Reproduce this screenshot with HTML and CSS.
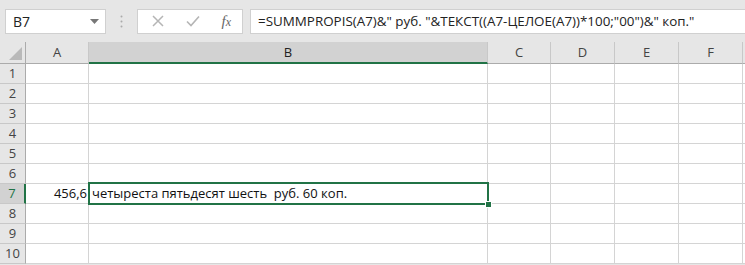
FILE: index.html
```html
<!DOCTYPE html>
<html>
<head>
    <meta name="viewport" content="width=device-width, initial-scale=1.0">
    <link rel="stylesheet" href="styles.css">
</head>
<body>
    <div class="formula-bar">
        <div class="name-box">
            <span>B7</span>
            <svg class="caret" width="9" height="5" viewBox="0 0 9 5"><path d="M0 0h9L4.5 5z" fill="#777"/></svg>
        </div>
        <div class="grip">
            <svg width="3" height="13" viewBox="0 0 3 13"><circle cx="1.5" cy="1.5" r="1" fill="#aaa"/><circle cx="1.5" cy="6.5" r="1" fill="#aaa"/><circle cx="1.5" cy="11.5" r="1" fill="#aaa"/></svg>
        </div>
        <div class="fx-buttons">
            <svg width="12" height="12" viewBox="0 0 12 12"><path d="M1 1l10 10M11 1L1 11" stroke="#b5b5b5" stroke-width="1.5"/></svg>
            <svg width="14" height="12" viewBox="0 0 14 12"><path d="M1 6.5l4 4L13 1.5" stroke="#b5b5b5" stroke-width="1.6" fill="none"/></svg>
            <span class="fx"><i>f</i><i>x</i></span>
        </div>
        <div class="formula">=SUMMPROPIS(A7)&amp;" руб. "&amp;ТЕКСТ((A7-ЦЕЛОЕ(A7))*100;"00")&amp;" коп."</div>
    </div>

    <div class="sheet">
        <div class="corner"><svg width="13" height="13" viewBox="0 0 13 13"><path d="M13 0v13H0z" fill="#b9b9b9"/></svg></div>
        <div class="col-head">A</div>
        <div class="col-head active">B</div>
        <div class="col-head">C</div>
        <div class="col-head">D</div>
        <div class="col-head">E</div>
        <div class="col-head">F</div>
        <div class="col-head"></div>
    </div>

    <script>
        // строим строки таблицы
        const sheet = document.querySelector(".sheet");
        for (let r = 1; r <= 10; r++) {
            const head = document.createElement("div");
            head.className = "row-head" + (r === 7 ? " active" : "");
            head.textContent = r;
            sheet.appendChild(head);
            for (let c = 0; c < 7; c++) {
                const cell = document.createElement("div");
                cell.className = "cell";
                if (r === 7 && c === 0) {
                    cell.className += " num";
                    cell.textContent = "456,6";
                }
                if (r === 7 && c === 1) {
                    cell.className += " selected";
                    cell.innerHTML = "четыреста пятьдесят шесть&nbsp; руб. 60 коп.<span class=\"handle\"></span>";
                }
                sheet.appendChild(cell);
            }
        }
    </script>
</body>
</html>
```

FILE: styles.css
```css
body {
    margin: 0;
    background-color: #e6e6e6;
    font-family: "Open Sans", "Noto Sans", sans-serif;
    overflow: hidden;
}

.formula-bar {
    display: flex;
    align-items: center;
    height: 42px;
    padding: 0 0 0 5px;
    box-sizing: border-box;
}

.name-box {
    display: flex;
    align-items: center;
    justify-content: space-between;
    width: 101px;
    height: 25px;
    box-sizing: border-box;
    background: #fff;
    border: 1px solid #d0d0d0;
    padding: 0 6px 0 7px;
    font-size: 14px;
    color: #222;
}

.grip {
    width: 31px;
    display: flex;
    justify-content: center;
}

.fx-buttons {
    display: flex;
    align-items: center;
    justify-content: space-between;
    width: 106px;
    height: 25px;
    box-sizing: border-box;
    background: #fff;
    border: 1px solid #d0d0d0;
    padding: 0 11px 0 14px;
}

.fx {
    font-family: "Liberation Serif", serif;
    font-size: 15px;
    color: #666;
}

.fx i:last-child {
    font-size: 12px;
}

.formula {
    flex: 1;
    height: 25px;
    margin-left: 7px;
    box-sizing: border-box;
    background: #fff;
    border: 1px solid #d0d0d0;
    border-right: none;
    padding: 0 0 0 7px;
    line-height: 23px;
    font-size: 13.4px;
    color: #222;
    white-space: nowrap;
}

.sheet {
    display: grid;
    grid-template-columns: 26px 63px 399px 63px 64px 64px 64px 1fr;
    grid-template-rows: 22px;
    grid-auto-rows: 20px;
    background: #fff;
}

.corner,
.col-head,
.row-head {
    background: #e6e6e6;
    box-sizing: border-box;
    color: #444;
    font-size: 13px;
}

.corner {
    display: flex;
    align-items: flex-end;
    justify-content: flex-end;
    padding: 0 3px 3px 0;
    border-right: 1px solid #ababab;
    border-bottom: 1px solid #ababab;
}

.col-head {
    text-align: center;
    line-height: 20px;
    border-right: 1px solid #c8c8c8;
    border-bottom: 1px solid #ababab;
}

.col-head.active {
    background: #d2d2d2;
    color: #222;
    border-bottom: 2px solid #217346;
}

.row-head {
    text-align: center;
    line-height: 19px;
    border-right: 1px solid #ababab;
    border-bottom: 1px solid #c8c8c8;
}

.row-head.active {
    background: #d2d2d2;
    color: #217346;
    border-right: 2px solid #217346;
}

.cell {
    box-sizing: border-box;
    border-right: 1px solid #d4d4d4;
    border-bottom: 1px solid #d4d4d4;
    font-family: "Open Sans", "Noto Sans", sans-serif;
    font-size: 13px;
    line-height: 19px;
    color: #111;
    padding: 0 2px 0 3px;
    white-space: nowrap;
}

.cell.num {
    text-align: right;
    border-right: none;
}

.cell.selected {
    position: relative;
}

.cell.selected::after {
    content: "";
    position: absolute;
    top: -2px;
    left: -1px;
    right: -2px;
    bottom: -2px;
    border: 2px solid #217346;
}

.handle {
    position: absolute;
    right: -5px;
    bottom: -5px;
    width: 5px;
    height: 5px;
    background: #217346;
    border: 1px solid #fff;
    z-index: 1;
}
```
